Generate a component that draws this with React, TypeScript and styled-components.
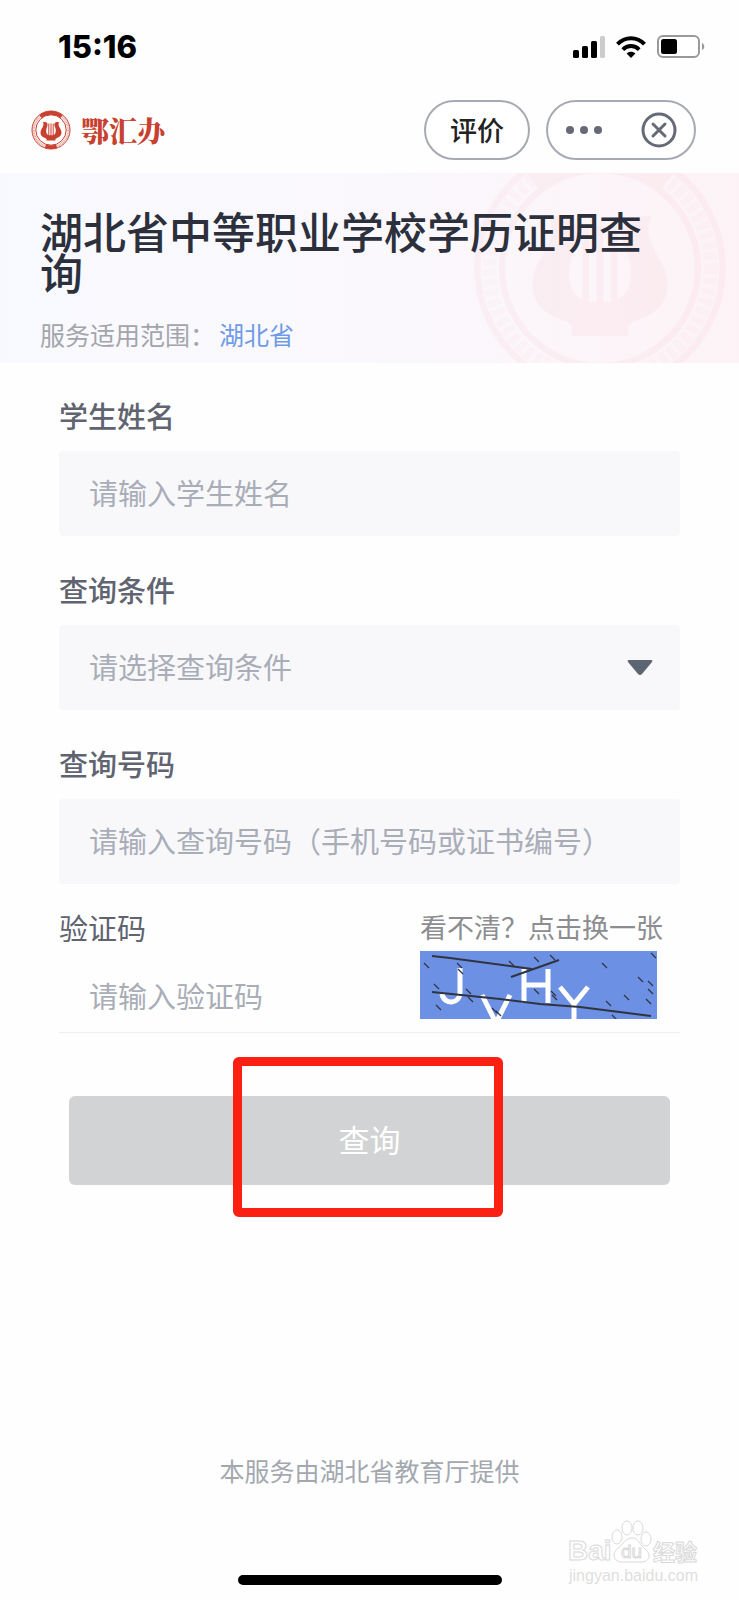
import React, { useState } from "react";
import styled, { createGlobalStyle } from "styled-components";

const GlobalStyle = createGlobalStyle`
  *, *::before, *::after { box-sizing: border-box; }
  body {
    margin: 0;
    background: #fefefe;
    font-family: "Noto Sans CJK SC", "Noto Sans", sans-serif;
    color: #2b303c;
  }
  button, input, select { font-family: inherit; margin: 0; }
`;

const Page = styled.div`
  position: relative;
  display: flex;
  flex-direction: column;
  min-height: 100vh;
`;

const StatusBar = styled.div`
  display: flex;
  align-items: center;
  justify-content: space-between;
  height: 92px;
  padding: 2px 34px 0 58px;
`;

const Clock = styled.time`
  font: 800 31px/32px Inter, sans-serif;
  color: #000;
`;

const StatusIcons = styled.div`
  display: flex;
  align-items: center;
  gap: 11px;
`;

const NavBar = styled.header`
  display: flex;
  align-items: center;
  gap: 16px;
  height: 81px;
  padding: 0 43px 5px 31px;
`;

const Brand = styled.a`
  display: flex;
  align-items: center;
  gap: 10px;
  margin-right: auto;
  color: #c8402f;
  text-decoration: none;
`;

const BrandName = styled.span`
  font-family: "Noto Serif CJK SC", "Noto Sans CJK SC", serif;
  font-size: 28px;
  font-weight: 900;
  line-height: 40px;
`;

const Pill = styled.div`
  display: flex;
  align-items: center;
  justify-content: space-between;
  width: 150px;
  height: 60px;
  padding: 0 17px;
  border: 2px solid #a7aab2;
  border-radius: 30px;
  background: #fff;
`;

const RateButton = styled.button`
  width: 106px;
  height: 60px;
  padding: 0;
  border: 2px solid #a7aab2;
  border-radius: 30px;
  background: #fff;
  color: #222;
  font-size: 27px;
  font-weight: 500;
  line-height: 40px;
`;

const IconButton = styled.button`
  display: flex;
  padding: 0;
  border: 0;
  background: none;
`;

const Banner = styled.section`
  position: relative;
  overflow: hidden;
  min-height: 190px;
  padding: 37px 80px 8px 40px;
  background: linear-gradient(90deg, #f8f9fe 0%, #faf8fd 50%, #fdf3f6 100%);
`;

const BannerEmblem = styled.div`
  position: absolute;
  top: -34px;
  right: 10px;
  color: #f7c4cf;
  opacity: 0.15;
`;

const Title = styled.h1`
  position: relative;
  margin: 0 0 24px;
  font-size: 43px;
  font-weight: 500;
  line-height: 41px;
`;

const Scope = styled.p`
  position: relative;
  display: flex;
  gap: 4px;
  margin: 0;
  color: #a3a5ab;
  font-size: 25px;
  line-height: 36px;
`;

const ScopeArea = styled.span`
  color: #6f9be6;
`;

const Form = styled.form`
  display: flex;
  flex-direction: column;
  padding: 32px 59px 0;
`;

const Field = styled.div`
  display: flex;
  flex-direction: column;
  gap: 16px;
  margin-bottom: 33px;
`;

const Label = styled.label<{ $light?: boolean }>`
  color: #5f6470;
  font-size: 29px;
  font-weight: ${(p) => (p.$light ? 400 : 500)};
  line-height: 40px;
`;

const TextInput = styled.input<{ $plain?: boolean }>`
  width: 100%;
  min-width: 0;
  height: ${(p) => (p.$plain ? "44px" : "85px")};
  padding: 0 30px 4px;
  border: 0;
  border-radius: 4px;
  outline: 0;
  background: ${(p) => (p.$plain ? "transparent" : "#f8f8fb")};
  color: #5f6470;
  font-size: 29px;
  &::placeholder { color: #a9adb7; opacity: 1; }
`;

const SelectBox = styled.div`
  display: grid;
  align-items: center;
  > * { grid-area: 1 / 1; }
  > svg { justify-self: end; margin-right: 27px; pointer-events: none; }
`;

const Select = styled.select`
  appearance: none;
  width: 100%;
  height: 85px;
  padding: 0 60px 4px 30px;
  border: 0;
  border-radius: 4px;
  outline: 0;
  background: #f8f8fb;
  color: #a9adb7;
  font-size: 29px;
`;

const CaptchaRow = styled.div`
  display: flex;
  justify-content: space-between;
  margin-top: -10px;
  padding-bottom: 13px;
  border-bottom: 1px solid #efeff1;
`;

const CaptchaEntry = styled.div`
  display: flex;
  flex: 1;
  flex-direction: column;
  justify-content: space-between;
  min-width: 0;
`;

const CaptchaSide = styled.div`
  display: flex;
  flex-direction: column;
  align-items: flex-start;
  gap: 4px;
  padding-right: 17px;
`;

const RefreshButton = styled.button`
  padding: 0;
  border: 0;
  background: none;
  color: #8c8d90;
  font-size: 27px;
  line-height: 40px;
  white-space: nowrap;
`;

const CaptchaPicture = styled.div`
  display: flex;
`;

const SubmitArea = styled.div`
  position: relative;
  display: flex;
  margin-top: 63px;
  padding: 0 10px;
`;

const SubmitButton = styled.button`
  flex: 1;
  height: 89px;
  padding: 0 0 4px;
  border: 0;
  border-radius: 6px;
  background: #d1d3d4;
  color: #fff;
  font-size: 31px;
`;

const Highlight = styled.div`
  position: absolute;
  top: -39px;
  bottom: -32px;
  left: 50%;
  width: 270px;
  margin-left: -137px;
  border: 9px solid #fc2012;
  border-radius: 6px;
  pointer-events: none;
`;

const Footer = styled.footer`
  display: flex;
  flex-direction: column;
  align-items: center;
  gap: 87px;
  margin-top: auto;
  padding-bottom: 15px;
`;

const Provider = styled.p`
  margin: 0;
  color: #a3a8b0;
  font-size: 25px;
  line-height: 36px;
`;

const HomeIndicator = styled.div`
  width: 264px;
  height: 10px;
  border-radius: 5px;
  background: #000;
`;

const Watermark = styled.div`
  position: absolute;
  right: 36px;
  bottom: 12px;
  display: flex;
`;

function Emblem({ size }: { size: number }) {
  return (
    <svg width={size} height={size} viewBox="0 0 40 40" fill="none" stroke="currentColor" aria-hidden="true">
      <circle cx="20" cy="20" r="19" strokeWidth="1" />
      <circle cx="20" cy="20" r="15.2" strokeWidth="1" />
      <circle cx="20" cy="20" r="17.2" strokeWidth="2.2" strokeDasharray="1 .6" opacity=".45" />
      <path d="M9.5 6.5A17 17 0 0 1 30.500 6.500" strokeWidth="3.600" />
      <path d="M14.500 36.200A17 17 0 0 0 25.500 36.200" strokeWidth="3.600" />
      <path
        d="M12 12C16 11.500 17.500 13.500 16 17C14.500 20.500 15 24.500 18 25.300H22C25 24.500 25.500 20.500 24 17C22.500 13.500 24 11.500 28 12C27 14 27.500 16 29.500 19C31.500 23 30.500 26.500 26 28C24.500 28.600 24 29 24.500 30.500H15.500C16 29 15.500 28.600 14 28C9.500 26.500 8.500 23 10.500 19C12.500 16 13 14 12 12Z"
        fill="currentColor"
        stroke="none"
      />
      <path d="M17.800 13.500V26M20 13.500V26M22.200 13.500V26" strokeWidth="1" />
    </svg>
  );
}

function SignalIcon() {
  return (
    <svg width="32" height="22" viewBox="0 0 32 22" aria-hidden="true">
      <rect x="0" y="14" width="6" height="8" rx="1.500" />
      <rect x="9" y="10" width="6" height="12" rx="1.500" />
      <rect x="18" y="5" width="6" height="17" rx="1.500" />
      <rect x="27" y="0" width="5" height="22" rx="1.500" fill="#ccc" />
    </svg>
  );
}

function WifiIcon() {
  return (
    <svg width="30" height="22" viewBox="0 0 30 22" fill="none" stroke="#000" strokeWidth="4" aria-hidden="true">
      <path d="M1.500 8.200C9 .2 21 .2 28.500 8.200" />
      <path d="M6.800 13.600C11.500 8.800 18.500 8.800 23.200 13.600" strokeWidth="3.800" />
      <path d="M10.600 17.600C13 15 17 15 19.400 17.600L15 22Z" fill="#000" stroke="none" />
    </svg>
  );
}

function BatteryIcon() {
  return (
    <svg width="48" height="24" viewBox="0 0 48 24" aria-hidden="true">
      <rect x="1" y="1" width="41" height="21" rx="5" fill="#fff" stroke="#999" strokeWidth="2" />
      <rect x="4" y="4" width="16" height="15" rx="2.500" />
      <path d="M45 8C48 9 48 14 45 15Z" fill="#999" />
    </svg>
  );
}

function CaptchaImage() {
  const specks = [
    [4, 12], [37, 12], [89, 10], [114, 6], [130, 4], [182, 12], [231, 2], [218, 26], [228, 30], [14, 33], [46, 38],
    [48, 46], [16, 54], [72, 57], [114, 38], [131, 40], [132, 44], [204, 44], [226, 48], [192, 64], [228, 38],
    [38, 18], [76, 60], [186, 50],
  ];
  return (
    <svg width="237" height="68" viewBox="0 0 237 68" role="img" aria-label="JVHY">
      <rect width="237" height="68" fill="#6c90e4" />
      <g fill="none" stroke="#fff" strokeWidth="5">
        <path d="M40 17V41C40 54 24 54 22 43" />
        <path d="M62 44L76 72L90 44" />
        <path d="M104 18V52M128 18V52M104 34H128" />
        <path d="M140 36L154 53L168 36M154 53V68" />
      </g>
      <g fill="none" stroke="#30343e" strokeWidth="2">
        <path d="M12 5L30 7L112 18M91 26L139 9" />
        <path d="M12 41L80 48L120 53L160 56L231 65" />
      </g>
      <g stroke="#30343e" strokeWidth="1.200">
        {specks.map(([x, y]) => (
          <path key={`${x}-${y}`} d={`M${x} ${y}l5 5`} />
        ))}
      </g>
    </svg>
  );
}

function WatermarkLogo() {
  return (
    <svg width="136" height="68" viewBox="0 0 136 68" fill="#fff" stroke="#d9d9d9" strokeWidth="1" aria-hidden="true">
      <g fontWeight="700">
        <text x="1" y="40" fontSize="28" fontFamily="Liberation Sans, sans-serif">Bai</text>
        <text x="86" y="40" fontSize="22" fontFamily="Noto Sans CJK SC, sans-serif">经验</text>
      </g>
      <ellipse cx="50" cy="17" rx="5" ry="7" />
      <ellipse cx="60" cy="8" rx="5" ry="7" />
      <ellipse cx="71" cy="8" rx="5" ry="7" />
      <ellipse cx="79" cy="19" rx="5" ry="7" />
      <path d="M65 18C58 18 57 24 51 28C44 34 47 42 55 42C61 42 68 42 74 42C83 42 85 34 77 28C72 24 72 18 65 18Z" />
      <text x="54" y="38" fontSize="19" fontFamily="Liberation Sans, sans-serif">du</text>
      <text x="2" y="61" fontSize="16" fontFamily="Liberation Sans, sans-serif" fill="#dedede" stroke="none">jingyan.baidu.com</text>
    </svg>
  );
}

export default function App() {
  const [condition, setCondition] = useState("");

  return (
    <>
      <GlobalStyle />
      <Page>
        <StatusBar>
          <Clock>15:16</Clock>
          <StatusIcons>
            <SignalIcon />
            <WifiIcon />
            <BatteryIcon />
          </StatusIcons>
        </StatusBar>

        <NavBar>
          <Brand href="#">
            <Emblem size={40} />
            <BrandName>鄂汇办</BrandName>
          </Brand>
          <RateButton type="button">评价</RateButton>
          <Pill>
            <IconButton type="button" aria-label="更多">
              <svg width="38" height="10" viewBox="0 0 38 10" fill="#666a76">
                <circle cx="5" cy="5" r="4" />
                <circle cx="19" cy="5" r="4" />
                <circle cx="33" cy="5" r="4" />
              </svg>
            </IconButton>
            <IconButton type="button" aria-label="关闭">
              <svg width="36" height="36" viewBox="0 0 36 36" fill="none" stroke="#666a76" strokeWidth="3">
                <circle cx="18" cy="18" r="16" />
                <path d="M12 12L24 24M24 12L12 24" strokeLinecap="round" />
              </svg>
            </IconButton>
          </Pill>
        </NavBar>

        <main>
          <Banner>
            <BannerEmblem>
              <Emblem size={258} />
            </BannerEmblem>
            <Title>湖北省中等职业学校学历证明查询</Title>
            <Scope>
              <span>服务适用范围：</span>
              <ScopeArea>湖北省</ScopeArea>
            </Scope>
          </Banner>

          <Form onSubmit={(e) => e.preventDefault()}>
            <Field>
              <Label htmlFor="name">学生姓名</Label>
              <TextInput id="name" placeholder="请输入学生姓名" />
            </Field>
            <Field>
              <Label htmlFor="condition">查询条件</Label>
              <SelectBox>
                <Select id="condition" value={condition} onChange={(e) => setCondition(e.target.value)}>
                  <option value="">请选择查询条件</option>
                </Select>
                <svg width="26" height="17" viewBox="0 0 26 17" fill="#5c6672" aria-hidden="true">
                  <path d="M2 1H24Q26 1 25 3L15 15Q13 17 11 15L1 3Q0 1 2 1Z" />
                </svg>
              </SelectBox>
            </Field>
            <Field>
              <Label htmlFor="number">查询号码</Label>
              <TextInput id="number" placeholder="请输入查询号码（手机号码或证书编号）" />
            </Field>
            <CaptchaRow>
              <CaptchaEntry>
                <Label htmlFor="captcha" $light>验证码</Label>
                <TextInput id="captcha" placeholder="请输入验证码" $plain />
              </CaptchaEntry>
              <CaptchaSide>
                <RefreshButton type="button">看不清？点击换一张</RefreshButton>
                <CaptchaPicture>
                  <CaptchaImage />
                </CaptchaPicture>
              </CaptchaSide>
            </CaptchaRow>
            <SubmitArea>
              <SubmitButton type="submit">查询</SubmitButton>
              <Highlight />
            </SubmitArea>
          </Form>
        </main>

        <Footer>
          <Provider>本服务由湖北省教育厅提供</Provider>
          <HomeIndicator />
        </Footer>
        <Watermark>
          <WatermarkLogo />
        </Watermark>
      </Page>
    </>
  );
}
